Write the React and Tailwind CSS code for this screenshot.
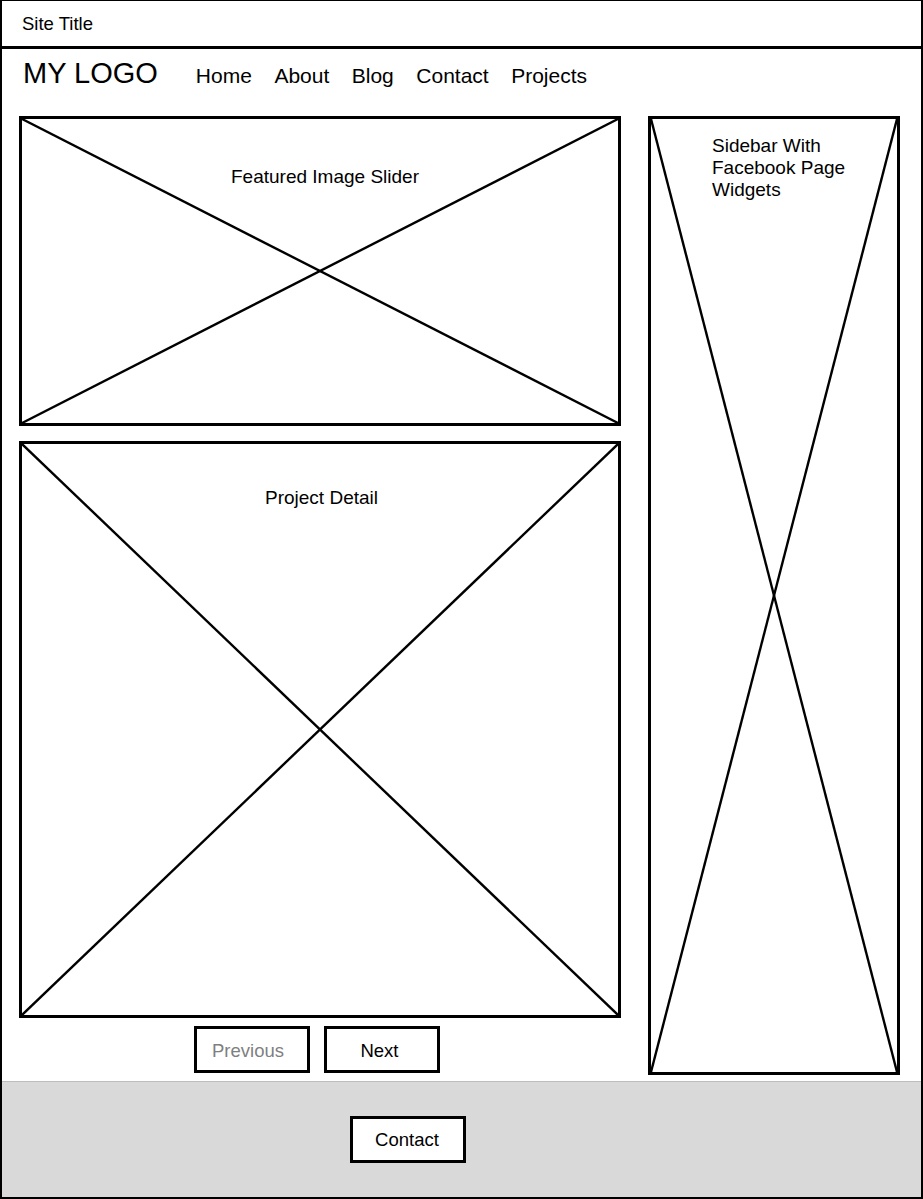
import React from "react";

const font = { fontFamily: '"Liberation Sans", Arial, sans-serif' };

// X placeholder drawn over a box
const Cross = () => (
  <svg className="absolute inset-0 h-full w-full" viewBox="0 0 100 100" preserveAspectRatio="none">
    <line x1="0" y1="0" x2="100" y2="100" stroke="black" strokeWidth="2.4" vectorEffect="non-scaling-stroke" />
    <line x1="100" y1="0" x2="0" y2="100" stroke="black" strokeWidth="2.4" vectorEffect="non-scaling-stroke" />
  </svg>
);

const Placeholder = ({ className, children }) => (
  <div className={`relative border-[3px] border-black bg-white ${className}`}>
    <Cross />
    <div className="relative">{children}</div>
  </div>
);

const navItems = ["Home", "About", "Blog", "Contact", "Projects"];

export default function App() {
  return (
    <div
      className="flex h-[1199px] w-[923px] flex-col border-t border-b-2 border-l-2 border-r-2 border-black bg-white text-black"
      style={font}
    >
      <div className="flex h-[45px] items-center pt-[1px] pl-[20px] text-[18.5px] leading-none">Site Title</div>
      <div className="h-[3px] bg-black" />

      <div className="flex h-[67px] items-baseline pt-[10px] pl-[21px] leading-none">
        <div className="text-[29px]">MY LOGO</div>
        <nav className="ml-[38px] flex gap-[22.5px] text-[21px]">
          {navItems.map((n) => (
            <span key={n}>{n}</span>
          ))}
        </nav>
      </div>

      <div className="flex gap-[27px] pl-[17px] pb-[6px]">
        <div className="flex w-[602px] flex-col">
          <Placeholder className="h-[310px]">
            <div className="pt-[48px] pl-[10px] text-center text-[19px] leading-none">Featured Image Slider</div>
          </Placeholder>
          <Placeholder className="mt-[15px] h-[577px]">
            <div className="pt-[44px] pl-[3px] text-center text-[19px] leading-none">Project Detail</div>
          </Placeholder>
          <div className="mt-[8px] flex gap-[14px] pl-[175px]">
            <button className="h-[47px] w-[116px] border-[3px] border-black pt-[3px] pr-[8px] text-[18.5px] text-[#7f7f7f]">
              Previous
            </button>
            <button className="h-[47px] w-[116px] border-[3px] border-black pt-[3px] pr-[5px] text-[18.5px]">Next</button>
          </div>
        </div>
        <Placeholder className="h-[959px] w-[252px]">
          <div className="pt-[16px] pl-[61px] text-[19px] leading-[22px]">
            Sidebar With
            <br />
            Facebook Page
            <br />
            Widgets
          </div>
        </Placeholder>
      </div>

      <footer className="flex flex-1 items-center border-t border-[#bdbdbd] bg-[#d9d9d9] pl-[348px]">
        <button className="h-[47px] w-[116px] border-[3px] border-black bg-white pr-[2px] text-[18.5px]">Contact</button>
      </footer>
    </div>
  );
}
